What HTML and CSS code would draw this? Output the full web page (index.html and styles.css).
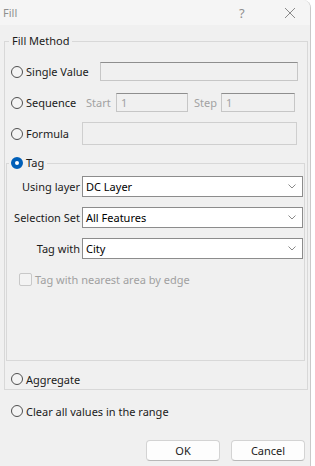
FILE: index.html
```html
<!DOCTYPE html>
<html lang="en">
<head>
    <meta charset="UTF-8">
    <title>Fill</title>
    <link rel="stylesheet" href="styles.css">
</head>
<body>

<div class="window">
    <!-- title bar -->
    <div class="titlebar">
        <span class="title">Fill</span>
        <span class="tb-help">?</span>
        <span class="tb-close">
            <svg width="12" height="12" viewBox="0 0 12 12"><path d="M1 1L11 11M11 1L1 11" stroke="#8a8a8a" stroke-width="1" fill="none"/></svg>
        </span>
    </div>

    <div class="content">
        <fieldset class="group method">
            <legend>Fill Method</legend>

            <div class="row first">
                <label class="radio w-single"><span class="dot"></span>Single Value</label>
                <div class="field single"></div>
            </div>

            <div class="row">
                <label class="radio w-seq"><span class="dot"></span>Sequence</label>
                <span class="hint">Start</span>
                <div class="field start">1</div>
                <span class="hint step-lbl">Step</span>
                <div class="field step">1</div>
            </div>

            <div class="row">
                <label class="radio w-formula"><span class="dot"></span>Formula</label>
                <div class="field formula"></div>
            </div>

            <!-- tag options -->
            <fieldset class="group tag">
                <legend><label class="radio"><span class="dot on"></span>Tag</label></legend>

                <div class="tag-body">
                    <div class="row">
                        <span class="lbl">Using layer</span>
                        <div class="combo">DC Layer<svg class="chev" width="8" height="5" viewBox="0 0 8 5"><path d="M0.5 0.5L4 4L7.5 0.5" stroke="#8a8a8a" fill="none"/></svg></div>
                    </div>
                    <div class="row">
                        <span class="lbl">Selection Set</span>
                        <div class="combo">All Features<svg class="chev" width="8" height="5" viewBox="0 0 8 5"><path d="M0.5 0.5L4 4L7.5 0.5" stroke="#8a8a8a" fill="none"/></svg></div>
                    </div>
                    <div class="row">
                        <span class="lbl">Tag with</span>
                        <div class="combo">City<svg class="chev" width="8" height="5" viewBox="0 0 8 5"><path d="M0.5 0.5L4 4L7.5 0.5" stroke="#8a8a8a" fill="none"/></svg></div>
                    </div>
                    <div class="row check-row">
                        <span class="box"></span>Tag with nearest area by edge
                    </div>
                </div>
            </fieldset>

            <div class="row short agg">
                <label class="radio"><span class="dot"></span>Aggregate</label>
            </div>
        </fieldset>

        <div class="row short clear">
            <label class="radio"><span class="dot"></span>Clear all values in the range</label>
        </div>

        <div class="buttons">
            <button class="btn">OK</button>
            <button class="btn">Cancel</button>
        </div>
    </div>
</div>

</body>
</html>
```

FILE: styles.css
```css
html, body {
    margin: 0;
    padding: 0;
    background-color: #ffffff;
}
body {
    font-family: "Noto Sans", "Open Sans", sans-serif;
    font-size: 11px;
    color: #1b1b1b;
}
.window {
    width: 310px;
    height: 466px;
    background-color: #f0f0f0;
    border-right: 1px solid #c9c9c9;
    border-top-right-radius: 8px;
    overflow: hidden;
}

/* title bar */
.titlebar {
    height: 25px;
    display: flex;
    align-items: center;
    background-color: #f5f5f5;
    color: #8f8f8f;
}
.title {
    margin-left: 3px;
    flex: 1;
}
.tb-help {
    width: 12px;
    margin-right: 33px;
    font-size: 13px;
}
.tb-close {
    display: flex;
    margin-right: 14px;
}

.content {
    padding-top: 8px;
}

/* group boxes */
.group {
    margin: 0;
    padding: 0;
    border: 1px solid #d8d8d8;
}
.group legend {
    padding: 0 3px;
    line-height: 16px;
}
.method {
    margin-left: 4px;
    width: 304px;
    box-sizing: border-box;
}
.method > legend {
    margin-left: 4px;
}
.tag {
    margin-left: 1px;
    margin-top: 6px;
    width: 299px;
    box-sizing: border-box;
}
.tag > legend {
    margin-left: 2px;
    padding: 0 3px 0 2px;
}
.tag-body {
    padding-bottom: 65px;
}

/* rows */
.row {
    display: flex;
    align-items: center;
    height: 31px;
    padding-left: 6px;
}
.row.first {
    margin-top: 7px;
}
.row.short {
    height: 20px;
}
.agg {
    margin-top: 8px;
}
.clear {
    margin-top: 11px;
    padding-left: 11px;
}

.radio {
    display: flex;
    align-items: center;
    white-space: nowrap;
}
.dot {
    width: 10px;
    height: 10px;
    border: 1px solid #4f4f4f;
    border-radius: 50%;
    background-color: #f4f4f4;
    margin-right: 3px;
    flex: none;
}
.dot.on {
    width: 4px;
    height: 4px;
    border: 4px solid #005fb8;
    background-color: #ffffff;
}
.w-single {
    width: 89px;
}
.w-seq {
    width: 75px;
}
.w-formula {
    width: 71px;
}

.hint {
    color: #a2a2a2;
    width: 30px;
}
.step-lbl {
    margin-left: 6px;
    width: 27px;
}
.field {
    height: 19px;
    box-sizing: border-box;
    border: 1px solid #c6c6c6;
    border-top-color: #8e8e8e;
    padding-left: 4px;
    line-height: 17px;
    color: #a2a2a2;
}
.single {
    width: 198px;
}
.start {
    width: 72px;
}
.step {
    width: 74px;
}
.formula {
    width: 215px;
    height: 23px;
    border-color: #cfcfcf;
}

/* tag rows */
.tag-body .row {
    padding-left: 0;
}
.lbl {
    width: 73px;
    text-align: right;
    margin-right: 2px;
    white-space: nowrap;
}
.combo {
    width: 221px;
    height: 21px;
    box-sizing: border-box;
    border: 1px solid #8c8c8c;
    background-color: #ffffff;
    display: flex;
    align-items: center;
    padding-left: 3px;
    color: #000000;
}
.chev {
    margin-left: auto;
    margin-right: 6px;
}
.check-row {
    color: #a0a0a0;
}
.tag-body .check-row {
    padding-left: 12px;
}
.box {
    width: 11px;
    height: 11px;
    border: 1px solid #c8c8c8;
    border-radius: 2px;
    background-color: #f3f3f3;
    margin-right: 3px;
}

/* buttons */
.buttons {
    display: flex;
    justify-content: flex-end;
    gap: 11px;
    margin-top: 19px;
    margin-right: 5px;
}
.btn {
    width: 74px;
    height: 21px;
    font-family: inherit;
    font-size: 11px;
    color: #1b1b1b;
    background-color: #fdfdfd;
    border: 1px solid #d3d3d3;
    border-bottom-color: #b8b8b8;
    border-radius: 4px;
    padding: 0;
}
```
